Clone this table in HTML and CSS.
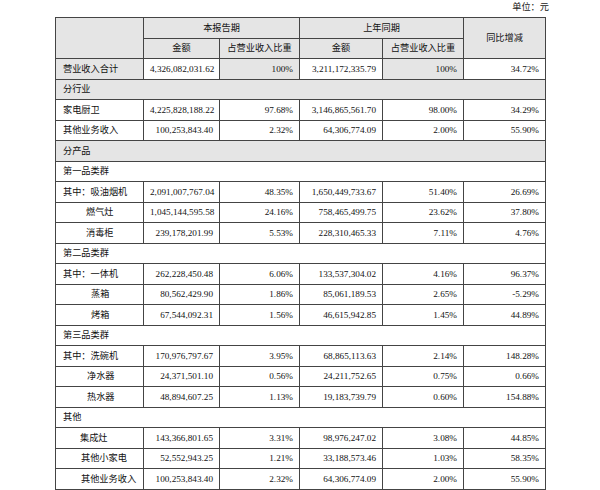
FILE: index.html
```html
<!DOCTYPE html>
<html lang="zh-CN">
<head>
<meta charset="utf-8">
<link rel="stylesheet" href="styles.css">
</head>
<body>
<div class="unit">单位：元</div>
<table class="rev">
<colgroup>
<col class="c1"><col class="c2"><col class="c3"><col class="c4"><col class="c5"><col class="c6">
</colgroup>
<tr class="hd"><th rowspan="2"></th><th colspan="2">本报告期</th><th colspan="2">上年同期</th><th rowspan="2">同比增减</th></tr>
<tr class="hd"><th>金额</th><th>占营业收入比重</th><th>金额</th><th>占营业收入比重</th></tr>
<tr><td class="lbl g">营业收入合计</td><td>4,326,082,031.62</td><td class="g">100%</td><td>3,211,172,335.79</td><td class="g">100%</td><td>34.72%</td></tr>
<tr class="sec g"><td colspan="6" class="lbl">分行业</td></tr>
<tr><td class="lbl">家电厨卫</td><td>4,225,828,188.22</td><td>97.68%</td><td>3,146,865,561.70</td><td>98.00%</td><td>34.29%</td></tr>
<tr><td class="lbl">其他业务收入</td><td>100,253,843.40</td><td>2.32%</td><td>64,306,774.09</td><td>2.00%</td><td>55.90%</td></tr>
<tr class="sec g"><td colspan="6" class="lbl">分产品</td></tr>
<tr class="sec"><td colspan="6" class="lbl">第一品类群</td></tr>
<tr><td class="lbl">其中：吸油烟机</td><td>2,091,007,767.04</td><td>48.35%</td><td>1,650,449,733.67</td><td>51.40%</td><td>26.69%</td></tr>
<tr><td class="lbl i30">燃气灶</td><td>1,045,144,595.58</td><td>24.16%</td><td>758,465,499.75</td><td>23.62%</td><td>37.80%</td></tr>
<tr><td class="lbl i30">消毒柜</td><td>239,178,201.99</td><td>5.53%</td><td>228,310,465.33</td><td>7.11%</td><td>4.76%</td></tr>
<tr class="sec"><td colspan="6" class="lbl">第二品类群</td></tr>
<tr><td class="lbl">其中：一体机</td><td>262,228,450.48</td><td>6.06%</td><td>133,537,304.02</td><td>4.16%</td><td>96.37%</td></tr>
<tr><td class="lbl i35">蒸箱</td><td>80,562,429.90</td><td>1.86%</td><td>85,061,189.53</td><td>2.65%</td><td>-5.29%</td></tr>
<tr><td class="lbl i35">烤箱</td><td>67,544,092.31</td><td>1.56%</td><td>46,615,942.85</td><td>1.45%</td><td>44.89%</td></tr>
<tr class="sec"><td colspan="6" class="lbl">第三品类群</td></tr>
<tr><td class="lbl">其中：洗碗机</td><td>170,976,797.67</td><td>3.95%</td><td>68,865,113.63</td><td>2.14%</td><td>148.28%</td></tr>
<tr><td class="lbl i31">净水器</td><td>24,371,501.10</td><td>0.56%</td><td>24,211,752.65</td><td>0.75%</td><td>0.66%</td></tr>
<tr><td class="lbl i31">热水器</td><td>48,894,607.25</td><td>1.13%</td><td>19,183,739.79</td><td>0.60%</td><td>154.88%</td></tr>
<tr class="sec"><td colspan="6" class="lbl">其他</td></tr>
<tr><td class="lbl i24">集成灶</td><td>143,366,801.65</td><td>3.31%</td><td>98,976,247.02</td><td>3.08%</td><td>44.85%</td></tr>
<tr><td class="lbl i25">其他小家电</td><td>52,552,943.25</td><td>1.21%</td><td>33,188,573.46</td><td>1.03%</td><td>58.35%</td></tr>
<tr><td class="lbl i25">其他业务收入</td><td>100,253,843.40</td><td>2.32%</td><td>64,306,774.09</td><td>2.00%</td><td>55.90%</td></tr>
</table>
</body>
</html>
```
FILE: styles.css
```css
html, body {
  margin: 0;
  padding: 0;
  background: #ffffff;
}
body {
  font-family: "Liberation Serif", "Noto Sans CJK SC", serif;
  font-size: 9.2px;
  color: #111;
}
.unit {
  width: 549px;
  height: 17px;
  line-height: 14px;
  text-align: right;
  color: #222;
}
.rev {
  margin-left: 55px;
  border-collapse: collapse;
  table-layout: fixed;
  width: 490px;
  border: 1.5px solid #555;
}
.c1 { width: 88px; }
.c2 { width: 76px; }
.c3 { width: 80px; }
.c4 { width: 83px; }
.c5 { width: 81px; }
.c6 { width: 82px; }
.rev tr { height: 20.5px; }
.rev th, .rev td {
  border: 1px solid #444;
  padding: 0 6px;
  white-space: nowrap;
  line-height: 12px;
}
.rev th {
  font-weight: normal;
  text-align: center;
  background: #e5e5e5;
}
.rev td {
  text-align: right;
}
.rev td.lbl {
  text-align: left;
  padding-left: 7px;
}
.g, .rev td.g { background: #e5e5e5; }
.rev td.i30 { padding-left: 30px; }
.rev td.i35 { padding-left: 35px; }
.rev td.i31 { padding-left: 31px; }
.rev td.i24 { padding-left: 24px; }
.rev td.i25 { padding-left: 25px; }
```
